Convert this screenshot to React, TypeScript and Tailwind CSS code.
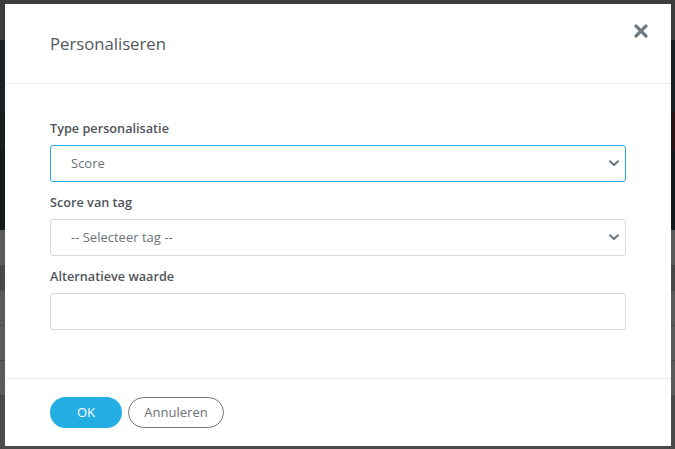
import React from "react";

function Chevron() {
  return (
    <svg width="10" height="7" viewBox="0 0 10 7" className="shrink-0">
      <path d="M1 1.2 L5 5 L9 1.2" fill="none" stroke="#6b7580" strokeWidth="2" strokeLinecap="round" strokeLinejoin="round" />
    </svg>
  );
}

export default function App() {
  return (
    <div
      className="relative w-[675px] h-[449px] overflow-hidden bg-[#3c3c3c]"
      style={{ fontFamily: '"Open Sans", "Liberation Sans", sans-serif' }}
    >
      {/* dimmed page behind */}
      <div className="flex flex-col w-full h-full">
        <div className="h-[40px] bg-[#3d3d3d]" />
        <div className="h-[72px] bg-[#1c2023]" />
        <div className="h-[38px] flex">
          <div className="flex-1 bg-[#1a1e21]" />
          <div className="w-[100px] bg-[#2b1215]" />
        </div>
        <div className="h-[80px] bg-[#16191c]" />
        <div className="h-[35px] bg-[#5a5a5a]" />
        <div className="h-[25px] bg-[#484848]" />
        <div className="h-[35px] bg-[#5a5a5a] border-t border-[#4a4a4a]" />
        <div className="h-[35px] bg-[#5b5b5b] border-t border-[#4a4a4a]" />
        <div className="h-[35px] bg-[#5b5b5b] border-t border-[#4a4a4a]" />
        <div className="flex-1 bg-[#4a4a4a]" />
      </div>

      {/* modal */}
      <div className="absolute left-[5px] top-[4px] w-[666px] h-[442px] bg-white flex flex-col">
        <div className="h-[80px] border-b border-[#e9ecef] flex items-start justify-between pl-[45px] pr-[20px]">
          <h2 className="mt-[29px] text-[16.7px] leading-[22px] text-[#53585e] font-normal">Personaliseren</h2>
          <button className="mt-[17px] w-[20px] h-[20px] flex items-center justify-center">
            <svg width="14" height="14" viewBox="0 0 14 14">
              <path d="M2 2 L12 12 M12 2 L2 12" stroke="#717b84" strokeWidth="3.2" strokeLinecap="round" />
            </svg>
          </button>
        </div>

        <div className="flex-1 px-[45px] pt-[35px] flex flex-col">
          <label className="text-[12.7px] leading-[18px] text-[#4f545a] font-semibold">Type personalisatie</label>
          <div className="mt-[8px] h-[37px] rounded-[3px] border border-[#2aabe3] flex items-center justify-between pl-[20px] pr-[6px]">
            <span className="text-[13px] text-[#6c7379]">Score</span>
            <Chevron />
          </div>

          <label className="mt-[11px] text-[12.7px] leading-[18px] text-[#4f545a] font-semibold">Score van tag</label>
          <div className="mt-[8px] h-[37px] rounded-[3px] border border-[#d9d9d9] flex items-center justify-between pl-[20px] pr-[6px]">
            <span className="text-[13px] text-[#6c7379]">-- Selecteer tag --</span>
            <Chevron />
          </div>

          <label className="mt-[11px] text-[12.7px] leading-[18px] text-[#4f545a] font-semibold">Alternatieve waarde</label>
          <div className="mt-[8px] h-[37px] rounded-[3px] border border-[#d9d9d9]" />
        </div>

        <div className="h-[68px] border-t border-[#e9ecef] flex items-start gap-[6px] pl-[45px] pt-[18px]">
          <button className="w-[72px] h-[31px] rounded-full bg-[#25aee4] text-white text-[13px]">OK</button>
          <button className="w-[96px] h-[31px] rounded-full border border-[#6f757b] text-[#6a7076] text-[13px]">Annuleren</button>
        </div>
      </div>
    </div>
  );
}
